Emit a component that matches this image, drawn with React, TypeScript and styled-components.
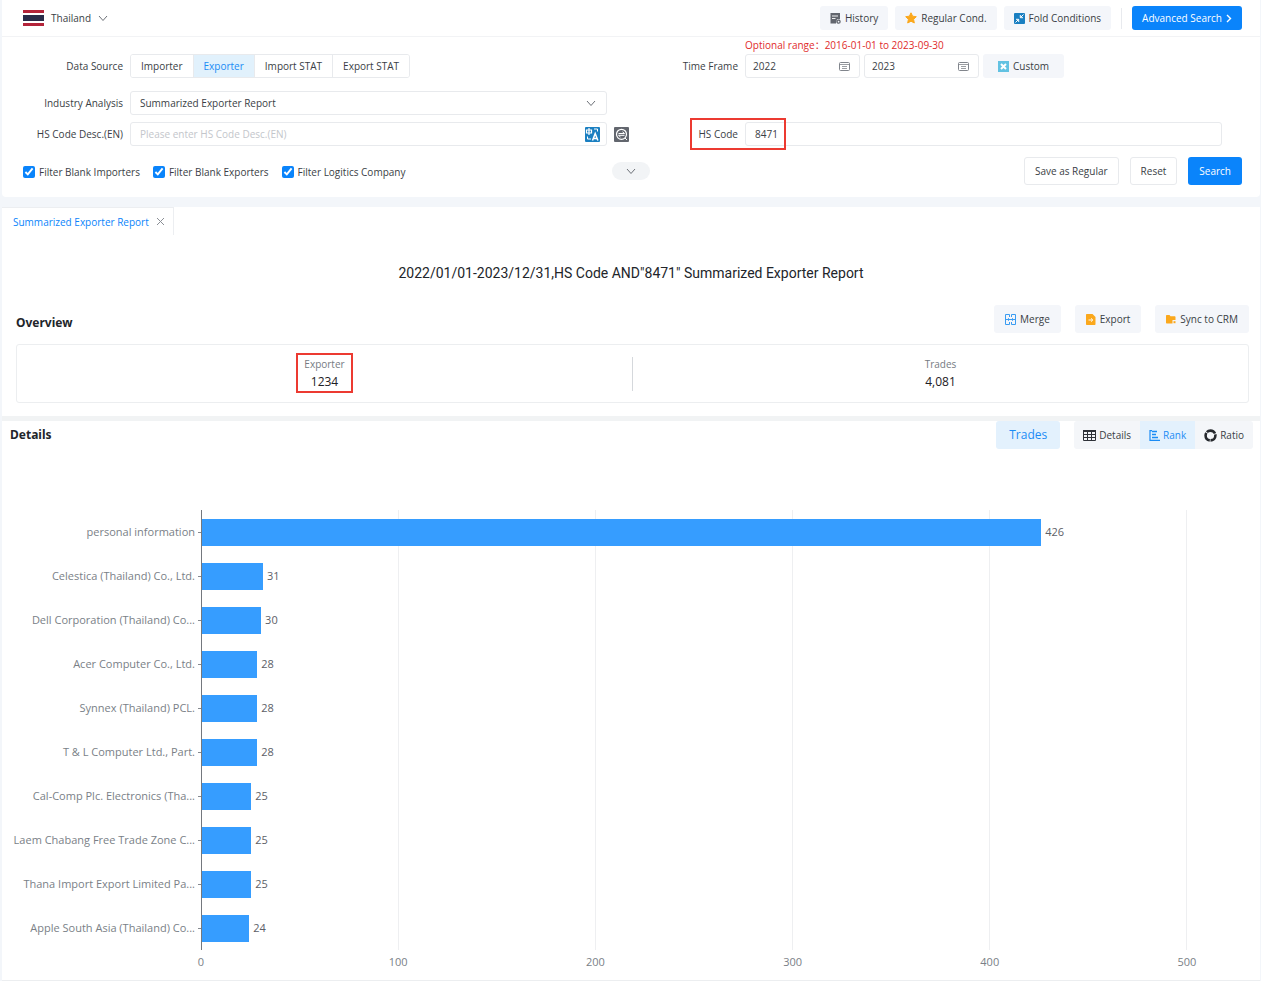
import React from "react";
import styled, { createGlobalStyle } from "styled-components";

const GlobalStyle = createGlobalStyle`
  * { box-sizing: border-box; }
  body {
    margin: 0;
    background: #f3f6fa;
    color: #3a3e45;
    font-family: "Open Sans", "Noto Sans", "Noto Sans CJK SC", sans-serif;
    font-size: 10px;
    line-height: 16px;
  }
  button, input, select { font: inherit; color: inherit; }
  button { cursor: pointer; }
  h1, h2 { margin: 0; }
`;

const Page = styled.div`
  padding: 0 1px 0 2px;
`;

const Panel = styled.section`
  background: #fff;
  border-radius: 0 0 4px 4px;
`;

const TopBar = styled.header`
  display: flex;
  align-items: center;
  justify-content: space-between;
  height: 37px;
  padding: 0 18px 0 21px;
  border-bottom: 1px solid #f2f3f5;
`;

const Country = styled.button`
  display: flex;
  align-items: center;
  gap: 7px;
  padding: 0;
  border: 0;
  background: none;
`;

const TopActions = styled.div`
  display: flex;
  align-items: center;
  gap: 7px;
`;

const Separator = styled.span`
  width: 1px;
  height: 21px;
  margin: 0 3px;
  background: #e8eaee;
`;

const SoftButton = styled.button<{ $tall?: boolean }>`
  display: flex;
  align-items: center;
  gap: 4px;
  height: ${(p) => (p.$tall ? 28 : 24)}px;
  padding: 0 ${(p) => (p.$tall ? 11 : 10)}px;
  border: 0;
  border-radius: 3px;
  background: #f4f6fa;
  white-space: nowrap;
`;

const PrimaryButton = styled.button<{ $tall?: boolean }>`
  display: flex;
  align-items: center;
  gap: 4px;
  height: ${(p) => (p.$tall ? 28 : 24)}px;
  padding: 0 ${(p) => (p.$tall ? 11 : 10)}px;
  border: 0;
  border-radius: 3px;
  background: #0a84fb;
  color: #fff;
  white-space: nowrap;
`;

const OutlineButton = styled.button`
  height: 28px;
  padding: 0 10px;
  border: 1px solid #e8eaed;
  border-radius: 3px;
  background: #fff;
  white-space: nowrap;
`;

const FormRow = styled.div<{ $top: number }>`
  display: grid;
  grid-template-columns: 121px minmax(0, 1fr) 124px minmax(0, 1fr);
  column-gap: 7px;
  align-items: center;
  padding-right: 38px;
  margin-top: ${(p) => p.$top}px;
`;

const FieldLabel = styled.label`
  text-align: right;
  white-space: nowrap;
`;

const FieldName = styled.span`
  text-align: right;
  white-space: nowrap;
`;

const RangeNote = styled.p`
  grid-column: 4;
  margin: 0;
  color: #e02b2b;
  white-space: nowrap;
`;

const Segments = styled.div`
  display: flex;
  justify-self: start;
  height: 24px;
  border: 1px solid #e8eaed;
  border-radius: 3px;
  overflow: hidden;
`;

const Segment = styled.button<{ $active?: boolean }>`
  padding: 0 10px;
  border: 0;
  background: ${(p) => (p.$active ? "#e1f1fc" : "#fff")};
  color: ${(p) => (p.$active ? "#1b8cf5" : "inherit")};
  white-space: nowrap;

  & + & { border-left: 1px solid #e8eaed; }
`;

const Box = styled.div`
  display: flex;
  align-items: center;
  height: 24px;
  padding: 0 6px 0 9px;
  border: 1px solid #e8eaed;
  border-radius: 3px;
  background: #fff;
`;

const Input = styled.input`
  flex: 1;
  width: 100%;
  min-width: 0;
  padding: 0;
  border: 0;
  outline: 0;
  background: none;

  &::placeholder { color: #c3c6cb; opacity: 1; }
`;

const SelectInput = styled.select`
  flex: 1;
  min-width: 0;
  padding: 0;
  border: 0;
  outline: 0;
  background: none;
  appearance: none;
`;

const SelectBox = styled(Box)`
  padding-right: 10px;
`;

const DateRow = styled.div`
  display: flex;
  gap: 4px;
`;

const DateBox = styled(Box)`
  width: 115px;
  padding: 0 9px 0 7px;
`;

const CustomButton = styled(SoftButton)`
  padding: 0 15px;
`;

const LabelCell = styled.div`
  display: flex;
  align-items: center;
  justify-content: space-between;
`;

const IconButton = styled.button`
  display: flex;
  padding: 0;
  border: 0;
  background: none;
`;

const Marked = styled.div`
  position: relative;
`;

const RedFrame = styled.span<{ $wide?: boolean }>`
  position: absolute;
  top: ${(p) => (p.$wide ? -8 : -3)}px;
  left: -8px;
  width: ${(p) => (p.$wide ? "96px" : "calc(100% + 16px)")};
  height: ${(p) => (p.$wide ? 32 : 40)}px;
  border: 2px solid #ec3a31;
  pointer-events: none;
`;

const FooterRow = styled.div`
  display: grid;
  grid-template-columns: 1fr auto 1fr;
  align-items: center;
  padding: 11px 0 12px;
`;

const Filters = styled.div`
  display: flex;
  gap: 13px;
  padding: 2px 0 0 21px;
`;

const Filter = styled.label`
  display: flex;
  align-items: center;
  gap: 4px;
  white-space: nowrap;
`;

const Tick = styled.input`
  width: 12px;
  height: 12px;
  margin: 0;
  accent-color: #0a84fb;
`;

const Pill = styled.button`
  display: flex;
  align-items: center;
  justify-content: center;
  width: 38px;
  height: 18px;
  padding: 0;
  border: 0;
  border-radius: 9px;
  background: #f2f4f6;
`;

const FormActions = styled.div`
  display: flex;
  justify-content: flex-end;
  gap: 11px;
  padding-right: 18px;
`;

const ReportPanel = styled(Panel)`
  margin-top: 10px;
  border-radius: 0;
`;

const TabBar = styled.nav`
  display: flex;
`;

const Tab = styled.div`
  display: flex;
  align-items: center;
  gap: 7px;
  height: 28px;
  padding: 0 8px 0 11px;
  border: solid #eceef1;
  border-width: 1px 1px 0 0;
`;

const TabLink = styled.a`
  color: #0a84fb;
  text-decoration: none;
  white-space: nowrap;
`;

const ReportTitle = styled.h1`
  padding: 28px 16px 0;
  font-family: Roboto, sans-serif;
  font-size: 14px;
  line-height: 20px;
  font-weight: 400;
  color: #22252a;
  text-align: center;
`;

const SectionHead = styled.div<{ $overview?: boolean }>`
  display: flex;
  align-items: ${(p) => (p.$overview ? "flex-end" : "center")};
  justify-content: space-between;
  padding: ${(p) => (p.$overview ? "22px 11px 0 14px" : "0 7px 0 8px")};
`;

const SectionTitle = styled.h2`
  font-family: "Noto Sans", sans-serif;
  font-size: 12px;
  line-height: 20px;
  font-weight: 700;
  color: #22252a;
`;

const SectionActions = styled.div`
  display: flex;
  gap: 14px;
`;

const Overview = styled.div`
  display: grid;
  grid-template-columns: 1fr 1px 1fr;
  align-items: center;
  height: 59px;
  margin: 11px 11px 0 14px;
  border: 1px solid #eceef0;
  border-radius: 3px;
`;

const Divider = styled.span`
  height: 34px;
  background: #d5d8dc;
`;

const Stat = styled.div`
  position: relative;
  justify-self: center;
  text-align: center;
  color: #767b83;
`;

const StatValue = styled.div`
  line-height: 20px;
  font-size: 12px;
  color: #1d2025;
`;

const Strip = styled.div`
  height: 5px;
  margin-top: 13px;
  background: #f1f3f4;
`;

const DetailsPanel = styled(Panel)`
  border-bottom: 1px solid #eceef0;
  border-radius: 0;
`;

const MetricButton = styled.button`
  height: 28px;
  padding: 0 13px;
  border: 0;
  border-radius: 3px;
  background: #e3f1fd;
  color: #1b8cf5;
  font-size: 12px;
`;

const ViewSwitch = styled.div`
  display: flex;
  height: 28px;
  border-radius: 3px;
  overflow: hidden;
`;

const ViewButton = styled.button<{ $active?: boolean }>`
  display: flex;
  align-items: center;
  gap: 3px;
  padding: 0 9px;
  border: 0;
  background: ${(p) => (p.$active ? "#e3f1fd" : "#f4f6f9")};
  color: ${(p) => (p.$active ? "#1b8cf5" : "inherit")};
`;

const Chart = styled.div`
  display: grid;
  grid-template-columns: 199px minmax(0, 1fr);
  padding: 61px 73px 10px 0;
  color: #7a7f87;
  font-size: 11px;
`;

const NameColumn = styled.div`
  display: grid;
  grid-auto-rows: 44px;
`;

const Name = styled.div`
  display: flex;
  align-items: center;
  justify-content: flex-end;
  gap: 3px;
  white-space: nowrap;

  &::after {
    content: "";
    width: 3px;
    height: 1px;
    background: #85898f;
  }
`;

const Plot = styled.div`
  display: grid;
`;

const GridLines = styled.div`
  grid-area: 1 / 1;
  display: grid;
  grid-template-columns: repeat(5, 1fr);
  padding-left: 1px;

  span { border-right: 1px solid #eeeff1; }
`;

const Bars = styled.div`
  grid-area: 1 / 1;
  display: grid;
  grid-auto-rows: 44px;
  border-left: 1px solid #74787e;
`;

const BarRow = styled.div`
  display: flex;
  align-items: center;
  gap: 4px;
  color: #5c6067;
`;

const Bar = styled.div`
  height: 27px;
  background: #369dff;
`;

const AxisLabels = styled.div`
  grid-column: 2;
  display: flex;
  justify-content: space-between;
  margin: 4px -20px 0;

  span {
    width: 40px;
    text-align: center;
  }
`;

const Arrow = () => (
  <svg width="10" height="10" viewBox="0 0 10 10" fill="none" stroke="#6c7077" aria-hidden="true">
    <path d="M1 3l4 4.500L9 3" />
  </svg>
);

const NextArrow = () => (
  <svg width="6" height="9" viewBox="0 0 6 9" fill="none" stroke="#fff" strokeWidth="1.400" aria-hidden="true">
    <path d="M1 1l3.500 3.500L1 8" />
  </svg>
);

const CloseIcon = () => (
  <svg width="9" height="9" viewBox="0 0 9 9" fill="none" stroke="#8b8f96" aria-hidden="true">
    <path d="M1 1l7 7M8 1L1 8" />
  </svg>
);

const Flag = () => (
  <svg width="21" height="16" viewBox="0 0 21 16" aria-hidden="true">
    <rect width="21" height="16" fill="#fff" />
    <rect width="21" height="3" fill="#b3243a" />
    <rect y="5" width="21" height="6" fill="#282c49" />
    <rect y="13" width="21" height="3" fill="#b3243a" />
  </svg>
);

const HistoryIcon = () => (
  <svg width="11" height="11" viewBox="0 0 11 11" aria-hidden="true">
    <path d="M.500 0h9.500v6.300H7L6 10.500H.500z" fill="#62666e" />
    <path d="M2 3h6M2 5.500h3.500" stroke="#fff" strokeWidth=".900" />
    <circle cx="8.600" cy="8.700" r="1.500" fill="none" stroke="#62666e" strokeWidth="1.300" />
  </svg>
);

const StarIcon = () => (
  <svg width="12" height="12" viewBox="0 0 12 12" aria-hidden="true">
    <path
      d="M6 .8l1.600 3.400 3.700.5-2.700 2.600.7 3.700L6 9.200 2.700 11l.7-3.700L.7 4.700l3.700-.5z"
      fill="#fba81c"
      stroke="#fba81c"
      strokeLinejoin="round"
    />
  </svg>
);

const FoldIcon = () => (
  <svg width="11" height="11" viewBox="0 0 11 11" aria-hidden="true">
    <rect width="11" height="11" rx="1" fill="#1a7fc1" />
    <path d="M9.500 1.500L6.500 4.500M6.300 2v2.700H9M1.500 9.500l3-3M2 6.300h2.700V9" stroke="#fff" fill="none" />
  </svg>
);

const CalendarIcon = () => (
  <svg width="11" height="9" viewBox="0 0 11 9" fill="none" stroke="#81858c" aria-hidden="true">
    <rect x=".5" y=".5" width="10" height="8" rx="1" />
    <path d="M1 2.500h9M3 4.500h5M3 6.500h5" strokeWidth=".8" />
  </svg>
);

const CustomIcon = () => (
  <svg width="11" height="11" viewBox="0 0 11 11" aria-hidden="true">
    <rect width="11" height="11" fill="#62c2e2" />
    <path d="M3 3l5 5M8 3L3 8" stroke="#fff" strokeWidth="2" />
  </svg>
);

const TranslateIcon = () => (
  <svg width="15" height="15" viewBox="0 0 15 15" fill="none" stroke="#fff" aria-hidden="true">
    <rect width="15" height="15" rx="1" fill="#1a7fc1" stroke="none" />
    <path d="M1.500 3h5v3h-5zM4 1v7" strokeWidth="1.200" />
    <path d="M7.500 13.500l2.700-7 2.700 7M8.500 11.500h3.600" strokeWidth="1.500" />
    <path d="M9 2h3.500v2.500M2.500 9.500V12H6" />
  </svg>
);

const MatchIcon = () => (
  <svg width="15" height="15" viewBox="0 0 15 15" fill="none" stroke="#fff" aria-hidden="true">
    <rect width="15" height="15" rx="1" fill="#62666e" stroke="none" />
    <circle cx="7.500" cy="7.300" r="5" strokeWidth="1.200" />
    <path d="M4.500 6.500h6L8.500 4.800M10.500 8.300h-6l2 1.700M11 11l2 2" />
  </svg>
);

const MergeIcon = () => (
  <svg width="11" height="11" viewBox="0 0 11 11" fill="none" stroke="#3a9cf2" aria-hidden="true">
    <path d="M4.500 3V.5h-4v10h4V8M6.500 3V.5h4v10h-4V8M.5 5.500h10" />
    <path d="M3 4l1.500 1.500L3 7M8 4L6.500 5.500 8 7" strokeWidth=".8" />
  </svg>
);

const ExportIcon = () => (
  <svg width="10" height="11" viewBox="0 0 10 11" aria-hidden="true">
    <path d="M1 0h5.500L9.500 3V10c0 .6-.4 1-1 1H1C.4 11 0 10.600 0 10V1c0-.6.4-1 1-1z" fill="#fba81c" />
    <path d="M2.500 6h4M5 4.300L6.800 6 5 7.700" stroke="#fff" strokeWidth=".9" fill="none" />
  </svg>
);

const SyncIcon = () => (
  <svg width="10" height="9" viewBox="0 0 10 9" aria-hidden="true">
    <path d="M0 1c0-.6.3-1 1-1h2.500l1 1.200H8.500c.6 0 1 .3 1 1V5H6.500v3.500H1c-.6 0-1-.3-1-1z" fill="#fba81c" />
    <path d="M7.500 6.200h2v2h-2z" fill="#fba81c" />
  </svg>
);

const TableIcon = () => (
  <svg width="13" height="11" viewBox="0 0 13 11" fill="none" stroke="#2f3238" aria-hidden="true">
    <path d="M0 1h13" strokeWidth="2" />
    <path d="M.5 1v9.500h12V1M0 4.500h13M0 7.500h13M4.500 1v9.500M8.500 1v9.500" />
  </svg>
);

const RankIcon = () => (
  <svg width="11" height="11" viewBox="0 0 11 11" fill="none" stroke="#1b8cf5" aria-hidden="true">
    <path d="M3 .6H1v9.800h10" strokeWidth="1.200" />
    <path d="M3 1.500h5M3 4.500h4M3 7.500h6" strokeWidth="1.400" />
  </svg>
);

const RatioIcon = () => (
  <svg width="13" height="13" viewBox="0 0 13 13" fill="none" stroke="#26292e" aria-hidden="true">
    <circle cx="6.500" cy="6.500" r="4.900" strokeWidth="2.600" strokeDasharray="9.500 .76" strokeDashoffset="2" />
  </svg>
);

const RANKING: { name: string; trades: number }[] = [
  { name: "personal information", trades: 426 },
  { name: "Celestica (Thailand) Co., Ltd.", trades: 31 },
  { name: "Dell Corporation (Thailand) Co...", trades: 30 },
  { name: "Acer Computer Co., Ltd.", trades: 28 },
  { name: "Synnex (Thailand) PCL.", trades: 28 },
  { name: "T & L Computer Ltd., Part.", trades: 28 },
  { name: "Cal-Comp Plc. Electronics (Tha...", trades: 25 },
  { name: "Laem Chabang Free Trade Zone C...", trades: 25 },
  { name: "Thana Import Export Limited Pa...", trades: 25 },
  { name: "Apple South Asia (Thailand) Co...", trades: 24 },
];

const AXIS_MAX = 500;
const AXIS_TICKS = [0, 100, 200, 300, 400, 500];
const FILTERS = ["Filter Blank Importers", "Filter Blank Exporters", "Filter Logitics Company"];

const SearchForm = () => (
  <Panel>
    <TopBar>
      <Country>
        <Flag />
        Thailand
        <Arrow />
      </Country>
      <TopActions>
        <SoftButton><HistoryIcon />History</SoftButton>
        <SoftButton><StarIcon />Regular Cond.</SoftButton>
        <SoftButton><FoldIcon />Fold Conditions</SoftButton>
        <Separator />
        <PrimaryButton>Advanced Search<NextArrow /></PrimaryButton>
      </TopActions>
    </TopBar>

    <FormRow $top={0}>
      <RangeNote>Optional range：2016-01-01 to 2023-09-30</RangeNote>
    </FormRow>
    <FormRow $top={1}>
      <FieldName>Data Source</FieldName>
      <Segments>
        <Segment>Importer</Segment>
        <Segment $active>Exporter</Segment>
        <Segment>Import STAT</Segment>
        <Segment>Export STAT</Segment>
      </Segments>
      <FieldLabel htmlFor="from">Time Frame</FieldLabel>
      <DateRow>
        <DateBox><Input id="from" defaultValue="2022" /><CalendarIcon /></DateBox>
        <DateBox><Input aria-label="Time Frame end" defaultValue="2023" /><CalendarIcon /></DateBox>
        <CustomButton><CustomIcon />Custom</CustomButton>
      </DateRow>
    </FormRow>
    <FormRow $top={13}>
      <FieldLabel htmlFor="analysis">Industry Analysis</FieldLabel>
      <SelectBox>
        <SelectInput id="analysis"><option>Summarized Exporter Report</option></SelectInput>
        <Arrow />
      </SelectBox>
    </FormRow>
    <FormRow $top={7}>
      <FieldLabel htmlFor="desc">HS Code Desc.(EN)</FieldLabel>
      <Box>
        <Input id="desc" placeholder="Please enter HS Code Desc.(EN)" />
        <IconButton aria-label="Translate"><TranslateIcon /></IconButton>
      </Box>
      <LabelCell>
        <IconButton aria-label="Match"><MatchIcon /></IconButton>
        <Marked>
          <FieldLabel htmlFor="code">HS Code</FieldLabel>
          <RedFrame $wide />
        </Marked>
      </LabelCell>
      <Box><Input id="code" defaultValue="8471" /></Box>
    </FormRow>

    <FooterRow>
      <Filters>
        {FILTERS.map((text) => (
          <Filter key={text}><Tick type="checkbox" defaultChecked />{text}</Filter>
        ))}
      </Filters>
      <Pill aria-label="Collapse"><Arrow /></Pill>
      <FormActions>
        <OutlineButton>Save as Regular</OutlineButton>
        <OutlineButton>Reset</OutlineButton>
        <PrimaryButton $tall>Search</PrimaryButton>
      </FormActions>
    </FooterRow>
  </Panel>
);

const Report = () => (
  <ReportPanel>
    <TabBar>
      <Tab>
        <TabLink href="#report">Summarized Exporter Report</TabLink>
        <IconButton aria-label="Close tab"><CloseIcon /></IconButton>
      </Tab>
    </TabBar>
    <ReportTitle>2022/01/01-2023/12/31,HS Code AND"8471" Summarized Exporter Report</ReportTitle>
    <SectionHead $overview>
      <SectionTitle>Overview</SectionTitle>
      <SectionActions>
        <SoftButton $tall><MergeIcon />Merge</SoftButton>
        <SoftButton $tall><ExportIcon />Export</SoftButton>
        <SoftButton $tall><SyncIcon />Sync to CRM</SoftButton>
      </SectionActions>
    </SectionHead>
    <Overview>
      <Stat>
        Exporter
        <StatValue>1234</StatValue>
        <RedFrame />
      </Stat>
      <Divider />
      <Stat>
        Trades
        <StatValue>4,081</StatValue>
      </Stat>
    </Overview>
    <Strip />
  </ReportPanel>
);

const Details = () => (
  <DetailsPanel>
    <SectionHead>
      <SectionTitle>Details</SectionTitle>
      <SectionActions>
        <MetricButton>Trades</MetricButton>
        <ViewSwitch>
          <ViewButton><TableIcon />Details</ViewButton>
          <ViewButton $active><RankIcon />Rank</ViewButton>
          <ViewButton><RatioIcon />Ratio</ViewButton>
        </ViewSwitch>
      </SectionActions>
    </SectionHead>
    <Chart>
      <NameColumn>
        {RANKING.map((r) => <Name key={r.name}>{r.name}</Name>)}
      </NameColumn>
      <Plot>
        <GridLines>
          {AXIS_TICKS.slice(1).map((t) => <span key={t} />)}
        </GridLines>
        <Bars>
          {RANKING.map((r) => (
            <BarRow key={r.name}>
              <Bar style={{ width: `${(r.trades / AXIS_MAX) * 100}%` }} />
              {r.trades}
            </BarRow>
          ))}
        </Bars>
      </Plot>
      <AxisLabels>
        {AXIS_TICKS.map((t) => <span key={t}>{t}</span>)}
      </AxisLabels>
    </Chart>
  </DetailsPanel>
);

export default function App() {
  return (
    <Page>
      <GlobalStyle />
      <SearchForm />
      <Report />
      <Details />
    </Page>
  );
}
